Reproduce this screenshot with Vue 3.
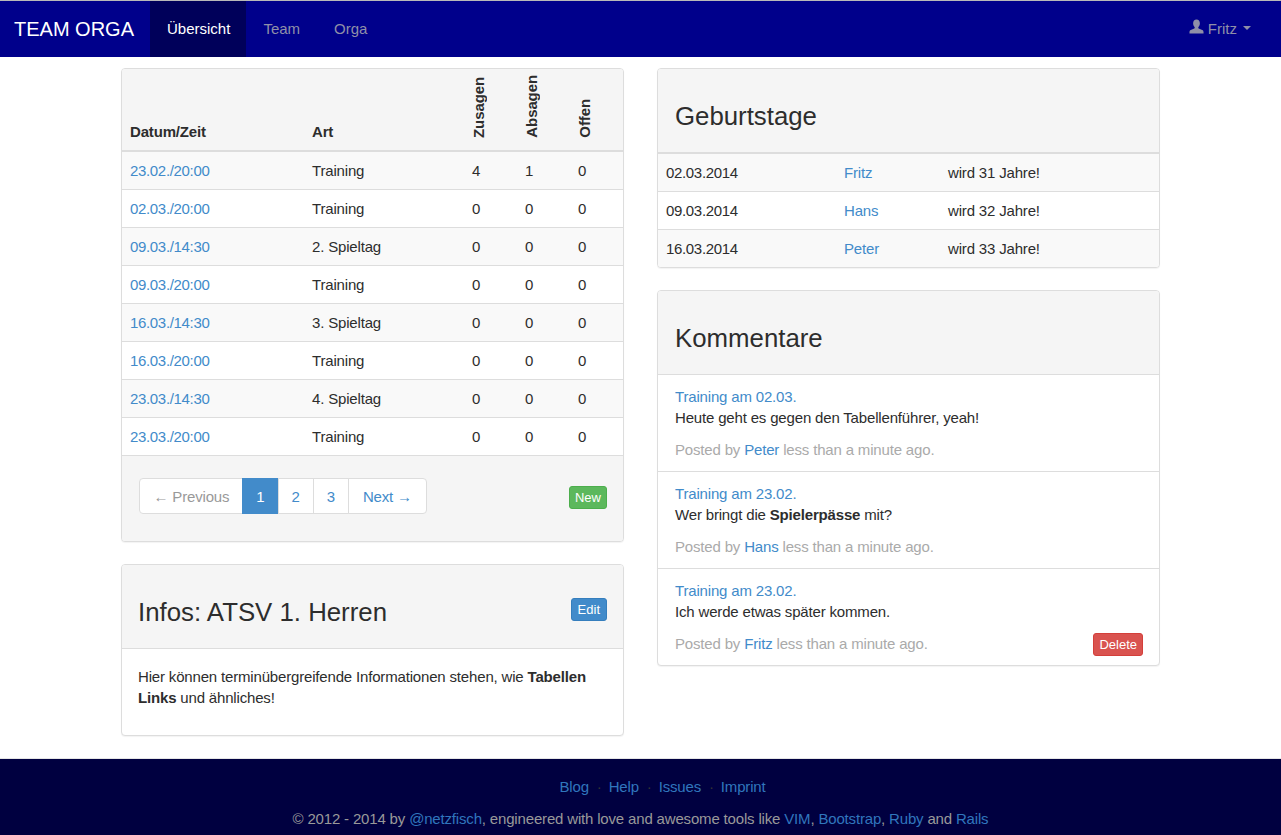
<template>
  <div class="page">
    <nav class="navbar">
      <a class="brand" href="#">TEAM ORGA</a>
      <ul class="nav-links">
        <li v-for="item in navItems" :key="item" :class="{ active: item === 'Übersicht' }">
          <a href="#">{{ item }}</a>
        </li>
      </ul>
      <a class="user" href="#">
        <svg class="user-icon" viewBox="0 0 16 16" width="15" height="15">
          <path fill="currentColor" d="M8 .5c2.3 0 3.6 1.7 3.6 4 0 1.700-.7 3.200-1.500 4-.4.500-.3 1.200.3 1.500l3.700 1.800c.9.400 1.400 1.200 1.400 2.200v1.500H.5V14c0-1 .5-1.800 1.400-2.200L5.600 10c.6-.3.7-1 .3-1.500-.8-.8-1.500-2.300-1.500-4C4.400 2.200 5.700.5 8 .5z" />
        </svg>
        Fritz
        <span class="caret"></span>
      </a>
    </nav>

    <main class="content">
      <div class="column">
        <section class="card">
          <table class="games">
            <thead>
              <tr>
                <th class="col-date">Datum/Zeit</th>
                <th class="col-art">Art</th>
                <th v-for="label in voteLabels" :key="label" class="col-vote">
                  <span class="rotated">{{ label }}</span>
                </th>
              </tr>
            </thead>
            <tbody>
              <tr v-for="game in games" :key="game.date + game.art">
                <td><a class="digits" href="#">{{ game.date }}</a></td>
                <td>{{ game.art }}</td>
                <td>{{ game.yes }}</td>
                <td>{{ game.no }}</td>
                <td>0</td>
              </tr>
            </tbody>
          </table>
          <div class="card-footer">
            <ul class="pagination">
              <li class="disabled"><a href="#">← Previous</a></li>
              <li class="current num"><a href="#">1</a></li>
              <li class="num"><a href="#">2</a></li>
              <li class="num"><a href="#">3</a></li>
              <li><a href="#">Next →</a></li>
            </ul>
            <a class="btn btn-green" href="#">New</a>
          </div>
        </section>

        <section class="card">
          <header class="card-heading heading-row">
            <h2>Infos: ATSV 1. Herren</h2>
            <a class="btn btn-blue" href="#">Edit</a>
          </header>
          <div class="info-body">
            Hier können terminübergreifende Informationen stehen, wie <strong>Tabellen</strong> <strong>Links</strong> und ähnliches!
          </div>
        </section>
      </div>

      <div class="column">
        <section class="card">
          <header class="card-heading">
            <h2>Geburtstage</h2>
          </header>
          <table class="birthdays">
            <tbody>
              <tr v-for="b in birthdays" :key="b.name">
                <td class="b-date digits">{{ b.date }}</td>
                <td class="b-name"><a href="#">{{ b.name }}</a></td>
                <td>wird {{ b.age }} Jahre!</td>
              </tr>
            </tbody>
          </table>
        </section>

        <section class="card">
          <header class="card-heading">
            <h2>Kommentare</h2>
          </header>
          <article class="comment">
            <a href="#">Training am 02.03.</a>
            <p>Heute geht es gegen den Tabellenführer, yeah!</p>
            <div class="meta">
              <span>Posted by <a href="#">Peter</a> less than a minute ago.</span>
            </div>
          </article>
          <article class="comment">
            <a href="#">Training am 23.02.</a>
            <p>Wer bringt die <strong>Spielerpässe</strong> mit?</p>
            <div class="meta">
              <span>Posted by <a href="#">Hans</a> less than a minute ago.</span>
            </div>
          </article>
          <article class="comment">
            <a href="#">Training am 23.02.</a>
            <p>Ich werde etwas später kommen.</p>
            <div class="meta">
              <span>Posted by <a href="#">Fritz</a> less than a minute ago.</span>
              <a class="btn btn-red" href="#">Delete</a>
            </div>
          </article>
        </section>
      </div>
    </main>

    <footer class="footer">
      <div class="footer-links">
        <a href="#">Blog</a><span class="dot">·</span>
        <a href="#">Help</a><span class="dot">·</span>
        <a href="#">Issues</a><span class="dot">·</span>
        <a href="#">Imprint</a>
      </div>
      <p>
        © 2012 - 2014 by <a href="#">@netzfisch</a>, engineered with love and awesome tools like
        <a href="#">VIM</a>, <a href="#">Bootstrap</a>, <a href="#">Ruby</a> and <a href="#">Rails</a>
      </p>
    </footer>
  </div>
</template>

<script setup>
const navItems = ["Übersicht", "Team", "Orga"];
const voteLabels = ["Zusagen", "Absagen", "Offen"];

const games = [
  { date: "23.02./20:00", art: "Training", yes: 4, no: 1 },
  { date: "02.03./20:00", art: "Training", yes: 0, no: 0 },
  { date: "09.03./14:30", art: "2. Spieltag", yes: 0, no: 0 },
  { date: "09.03./20:00", art: "Training", yes: 0, no: 0 },
  { date: "16.03./14:30", art: "3. Spieltag", yes: 0, no: 0 },
  { date: "16.03./20:00", art: "Training", yes: 0, no: 0 },
  { date: "23.03./14:30", art: "4. Spieltag", yes: 0, no: 0 },
  { date: "23.03./20:00", art: "Training", yes: 0, no: 0 },
];

const birthdays = [
  { date: "02.03.2014", name: "Fritz", age: 31 },
  { date: "09.03.2014", name: "Hans", age: 32 },
  { date: "16.03.2014", name: "Peter", age: 33 },
];
</script>

<style>
body {
  margin: 0;
  background: #fff;
}
</style>

<style scoped>
.page {
  font-family: "Liberation Sans", Arial, sans-serif;
  font-size: 15px;
  letter-spacing: -0.17px;
  line-height: 21px;
  color: #2d2d2d;
}
a {
  color: #428bca;
  text-decoration: none;
}
ul {
  list-style: none;
  margin: 0;
  padding: 0;
}
.digits {
  letter-spacing: -0.33px;
}

.navbar {
  display: flex;
  align-items: stretch;
  height: 56px;
  background: #00008b;
  border-top: 1px solid #b9b9b9;
  letter-spacing: normal;
}
.brand {
  padding: 17px 16px 0 14px;
  font-size: 20px;
  color: #fff;
  line-height: 22px;
}
.nav-links {
  display: flex;
}
.nav-links a {
  display: block;
  padding: 0 17px;
  line-height: 56px;
  color: #8f8fa8;
}
.nav-links .active a {
  padding-right: 16px;
  background: #00005a;
  color: #fff;
}
.user {
  margin-left: auto;
  display: flex;
  align-items: center;
  gap: 4px;
  padding: 0 30px 2px 0;
  color: #8f8fa8;
}
.user-icon {
  margin-top: -3px;
}
.caret {
  width: 0;
  height: 0;
  margin-left: 2px;
  border-top: 4px solid #8f8fa8;
  border-left: 4px solid transparent;
  border-right: 4px solid transparent;
}

.content {
  width: 1039px;
  margin: 0 auto;
  padding: 11px 0 22px;
  display: grid;
  grid-template-columns: 503px 503px;
  column-gap: 33px;
  align-items: start;
}
.column {
  display: flex;
  flex-direction: column;
  gap: 22px;
}
.card {
  background: #fff;
  border: 1px solid #ddd;
  border-radius: 4px;
  box-shadow: 0 1px 1px rgba(0, 0, 0, 0.05);
  overflow: hidden;
}
.card-heading {
  height: 84px;
  box-sizing: border-box;
  padding: 31px 17px 0;
  background: #f5f5f5;
  border-bottom: 1px solid #ddd;
}
.heading-row {
  display: flex;
  justify-content: space-between;
  align-items: flex-start;
  padding-left: 16px;
  padding-right: 16px;
}
h2 {
  margin: 0;
  font-size: 25.8px;
  font-weight: 400;
  letter-spacing: normal;
  line-height: 32px;
}

table {
  width: 100%;
  border-collapse: collapse;
  table-layout: fixed;
}
th {
  background: #f5f5f5;
  text-align: left;
  vertical-align: bottom;
  padding: 8px;
  border-bottom: 2px solid #ddd;
}
td {
  padding: 8px;
  height: 21px;
  border-top: 1px solid #ddd;
}
thead + tbody tr:first-child td {
  border-top: 0;
}
tbody tr:nth-child(odd) td {
  background: #f9f9f9;
}
.col-date {
  width: 166px;
}
.col-art {
  width: 144px;
}
.col-vote {
  width: 37px;
  height: 65px;
  padding: 4px 8px 12px;
}
.rotated {
  display: block;
  width: fit-content;
  margin-left: -1px;
  line-height: 15px;
  letter-spacing: -0.1px;
  writing-mode: vertical-rl;
  transform: rotate(180deg);
}

.card-footer {
  display: flex;
  justify-content: space-between;
  align-items: center;
  height: 86px;
  box-sizing: border-box;
  padding: 22px 16px 27px 17px;
  background: #f5f5f5;
  border-top: 1px solid #ddd;
}
.pagination {
  display: flex;
}
.pagination a {
  display: block;
  padding: 6.5px 14px;
  background: #fff;
  border: 1px solid #ddd;
  margin-left: -1px;
}
.pagination .disabled a {
  padding-left: 13.5px;
  padding-right: 13px;
}
.pagination .num a {
  padding-left: 13px;
  padding-right: 13px;
}
.pagination li:first-child a {
  margin-left: 0;
  border-radius: 4px 0 0 4px;
}
.pagination li:last-child a {
  border-radius: 0 4px 4px 0;
}
.pagination .disabled a {
  color: #999;
}
.pagination .current a {
  background: #428bca;
  border-color: #428bca;
  color: #fff;
}

.btn {
  display: inline-block;
  padding: 1px 5px;
  font-size: 13px;
  letter-spacing: normal;
  line-height: 19px;
  color: #fff;
  border: 1px solid;
  border-radius: 3px;
}
.btn-green {
  background: #5cb85c;
  border-color: #4cae4c;
  margin-top: 2px;
}
.btn-blue {
  background: #428bca;
  border-color: #357ebd;
  margin-top: 2px;
  padding: 1px 6px;
}
.btn-red {
  background: #d9534f;
  border-color: #d43f3a;
}

.info-body {
  padding: 17px 16px 27px;
}

.birthdays {
  border-top: 1px solid #ddd;
}
.birthdays tr:first-child td {
  border-top: 0;
}
.b-date {
  width: 162px;
}
.b-name {
  width: 88px;
}

.comment {
  height: 85px;
  padding: 11px 16px 0 17px;
  border-top: 1px solid #ddd;
}
.card-heading + .comment {
  border-top: 0;
}
.comment p {
  margin: 0 0 11px;
}
.comment > a {
  display: block;
}
.meta {
  display: flex;
  justify-content: space-between;
  align-items: center;
  color: #aaa;
  height: 21px;
}
.meta .btn {
  margin-top: 1px;
}

.footer {
  height: 77px;
  box-sizing: border-box;
  padding-top: 17px;
  background: #000040;
  border-top: 1px solid #e5e5e5;
  text-align: center;
  color: #999;
}
.footer-links {
  padding-left: 44px;
}
.footer-links a,
.footer p a {
  color: #3076bd;
}
.footer p {
  margin: 11px 0 0;
}
.dot {
  margin: 0 7px 0 8px;
  color: #333;
}
</style>
